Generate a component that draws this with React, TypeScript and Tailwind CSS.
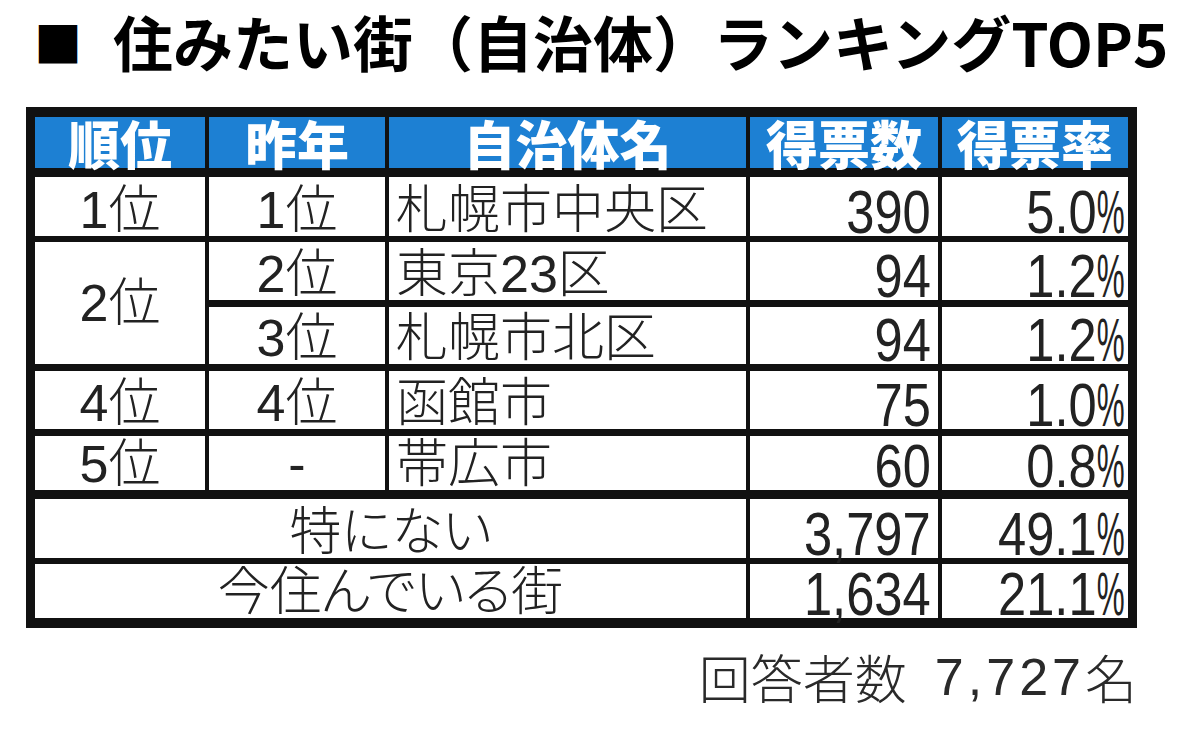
import React from "react";

const COLS = "grid grid-cols-[170px_176px_357px_188px_186px] gap-x-[4px]";
const HEAD =
  "bg-[#1d80d3] flex items-center justify-center [font-family:'Noto_Sans_CJK_JP',sans-serif] font-black text-[52px] leading-[51px] text-white";
const BODY =
  "[font-family:'Liberation_Sans','Noto_Sans_CJK_JP',sans-serif] font-light text-[52px] leading-[52px] text-[#222]";
const NUM =
  "[font-family:'Liberation_Sans',sans-serif] text-[61px] leading-[48px] text-[#222]";

const CENTER = "bg-white flex items-end justify-center " + BODY;
const LEFT = "bg-white flex items-end justify-start pl-[7px] " + BODY;
const NUM4 = "bg-white flex items-end justify-end pr-[7px] " + NUM;
const NUM5 = "bg-white flex items-end justify-end pr-[3px] " + NUM;
const SPAN3 =
  "bg-white flex items-end justify-center [font-feature-settings:'palt'] " + BODY;

function Count({ v }: { v: string }) {
  return <span className="inline-block whitespace-nowrap scale-x-[0.83] origin-right">{v}</span>;
}

function Pct({ v }: { v: string }) {
  return (
    <span className="inline-block whitespace-nowrap scale-x-[0.83] origin-right">
      {v}
      <span className="inline-block scale-x-[0.62] origin-left -mr-[20px]">%</span>
    </span>
  );
}

function Row({
  cls,
  a,
  b,
  c,
  d,
  e,
}: {
  cls: string;
  a: string;
  b: string;
  c: string;
  d: string;
  e: string;
}) {
  return (
    <div className={cls}>
      <div className={CENTER}>
        <span>{a}</span>
      </div>
      <div className={CENTER}>
        <span>{b}</span>
      </div>
      <div className={LEFT}>
        <span>{c}</span>
      </div>
      <div className={NUM4}>
        <Count v={d} />
      </div>
      <div className={NUM5}>
        <Pct v={e} />
      </div>
    </div>
  );
}

export default function App() {
  return (
    <div className="w-[1200px] h-[746px] bg-white overflow-hidden pl-[26px] pt-[11px]">
      {/* Title */}
      <div className="flex items-start h-[60px] whitespace-nowrap [font-family:'Noto_Sans_CJK_JP',sans-serif] text-black">
        <span className="shrink-0 text-[48px] leading-[60px] w-[48px] ml-[8px] font-bold">■</span>
        <span className="shrink-0 text-[60px] leading-[60px] font-bold ml-[31px]">
          住みたい街（自治体）ランキングTOP5
        </span>
      </div>

      <div className="w-[1111px] mt-[36px]">
        {/* Table */}
        <div className="bg-[#111] pt-[10px] pb-[10px] px-[9px] flex flex-col">
          <div className={COLS + " h-[51px]"}>
            <div className={HEAD}>順位</div>
            <div className={HEAD}>昨年</div>
            <div className={HEAD}>自治体名</div>
            <div className={HEAD}>得票数</div>
            <div className={HEAD}>得票率</div>
          </div>

          <Row
            cls={COLS + " h-[59px] mt-[9px]"}
            a="1位"
            b="1位"
            c="札幌市中央区"
            d="390"
            e="5.0"
          />

          <div className={COLS + " grid-rows-[58px_57px] gap-y-[7px] mt-[6px]"}>
            <div className={"row-span-2 bg-white flex items-center justify-center " + BODY}>
              <span>2位</span>
            </div>
            <div className={CENTER}>
              <span>2位</span>
            </div>
            <div className={LEFT}>
              <span>東京23区</span>
            </div>
            <div className={NUM4}>
              <Count v="94" />
            </div>
            <div className={NUM5}>
              <Pct v="1.2" />
            </div>
            <div className={CENTER}>
              <span>3位</span>
            </div>
            <div className={LEFT}>
              <span>札幌市北区</span>
            </div>
            <div className={NUM4}>
              <Count v="94" />
            </div>
            <div className={NUM5}>
              <Pct v="1.2" />
            </div>
          </div>

          <Row
            cls={COLS + " h-[58px] mt-[7px]"}
            a="4位"
            b="4位"
            c="函館市"
            d="75"
            e="1.0"
          />
          <Row
            cls={COLS + " h-[54px] mt-[7px]"}
            a="5位"
            b="-"
            c="帯広市"
            d="60"
            e="0.8"
          />

          <div className="grid grid-cols-[711px_188px_186px] gap-x-[4px] h-[59px] mt-[9px]">
            <div className={SPAN3}>
              <span>特にない</span>
            </div>
            <div className={NUM4}>
              <Count v="3,797" />
            </div>
            <div className={NUM5}>
              <Pct v="49.1" />
            </div>
          </div>
          <div className="grid grid-cols-[711px_188px_186px] gap-x-[4px] h-[54px] mt-[6px]">
            <div className={SPAN3}>
              <span>今住んでいる街</span>
            </div>
            <div className={NUM4}>
              <Count v="1,634" />
            </div>
            <div className={NUM5}>
              <Pct v="21.1" />
            </div>
          </div>
        </div>

        {/* Footer */}
        <div className="flex justify-end items-start mt-[23px] whitespace-nowrap [font-family:'Noto_Sans_CJK_JP',sans-serif] font-light text-[52px] leading-[52px] text-[#2a2a2a]">
          <span>回答者数</span>
          <span className="ml-[28px] [font-family:'Liberation_Sans',sans-serif] tracking-[4px]">
            7,727
          </span>
          <span>名</span>
        </div>
      </div>
    </div>
  );
}
